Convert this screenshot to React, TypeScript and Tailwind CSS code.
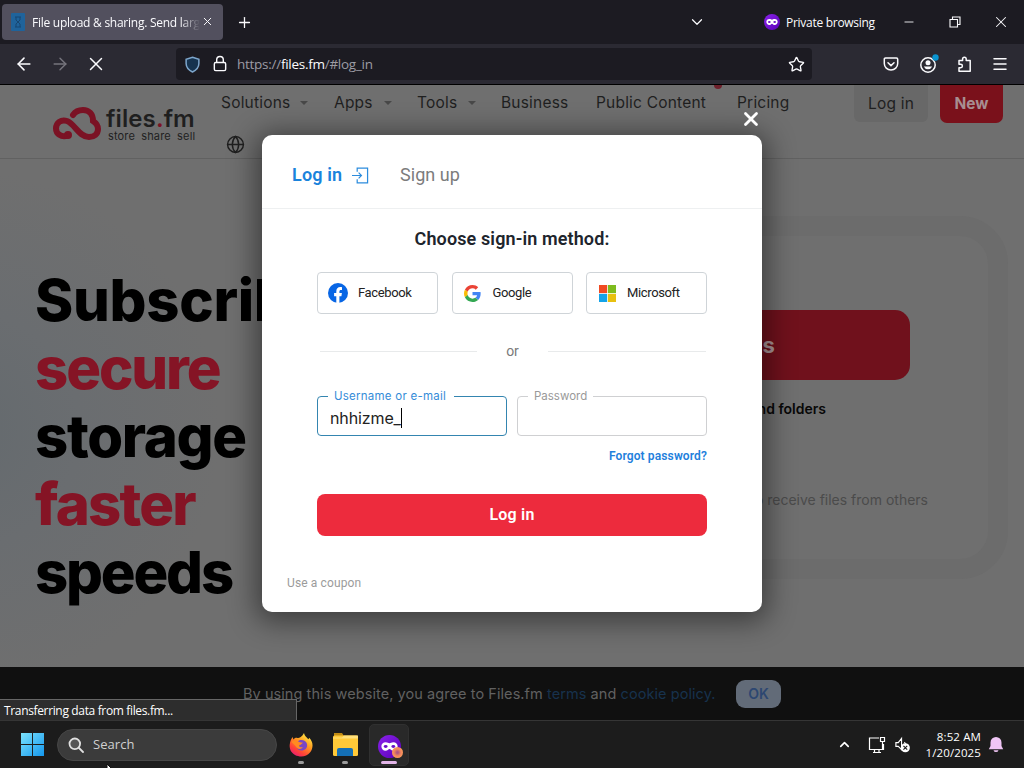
import { ReactNode } from "react";
import { ArrowLeft, ArrowRight, ChevronDown, ChevronUp, Globe, Lock, Menu, Minus, Plus, Search, Star, X } from "lucide-react";

const MaskIcon = ({ className }: { className: string }) => (
  <svg viewBox="0 0 24 24" className={className}>
    <defs>
      <linearGradient id="mask" x1="0" y1="0" x2="1" y2="1">
        <stop offset="0" stopColor="#8a22ea" />
        <stop offset="1" stopColor="#5a00b8" />
      </linearGradient>
    </defs>
    <circle cx="12" cy="12" r="12" fill="url(#mask)" />
    <path
      d="M8 7.500c2.200 0 2.800 1 4 1s1.800-1 4-1c2.700 0 4.500 1.800 4.500 4.300 0 2.700-2 4.700-4.300 4.700-2.200 0-3-2-4.200-2s-2 2-4.200 2c-2.300 0-4.300-2-4.300-4.700C3.500 9.300 5.300 7.500 8 7.500z"
      fill="#fff"
    />
    <ellipse cx="8" cy="12" rx="2" ry="1.500" fill="#6a10c8" />
    <ellipse cx="16" cy="12" rx="2" ry="1.500" fill="#6a10c8" />
  </svg>
);

const TitleBar = () => (
  <div className="flex h-11 shrink-0 items-center bg-[#1c1b22] text-[#fbfbfe]">
    <div className="ml-[2px] mb-px flex h-9 w-[221px] items-center rounded-[4px] bg-[#52505e] pl-[9px] pr-[8px]">
      <svg viewBox="0 0 14 18" className="h-[18px] w-[14px] shrink-0">
        <rect width="14" height="18" rx="1" fill="#1f639b" />
        <path d="M4 4h6M4 14h6M5 4v3l2 2-2 2v3M9 4v3L7 9l2 2v3" stroke="#174772" fill="none" />
      </svg>
      <span className="ml-[7px] w-[168px] overflow-hidden whitespace-nowrap pt-[2px] font-['Open_Sans',sans-serif] text-[12px] tracking-[-0.260px] [mask-image:linear-gradient(to_right,black_88%,transparent)]">
        File upload &amp; sharing. Send large files
      </span>
      <X className="ml-px size-[13px] shrink-0" strokeWidth={1.800} />
    </div>
    <Plus className="ml-[13px] size-[17px]" strokeWidth={1.800} />
    <div className="ml-auto flex items-center">
      <ChevronDown className="mr-[58px] size-[18px]" strokeWidth={1.600} />
      <MaskIcon className="size-4" />
      <span className="ml-[6px] w-[89px] whitespace-nowrap pt-px font-['Open_Sans',sans-serif] text-[12px] tracking-[-0.280px]">Private browsing</span>
      <Minus className="ml-[27px] size-[14px]" strokeWidth={1.500} />
      <svg viewBox="0 0 12 12" className="ml-[33px] size-3" fill="none" stroke="currentColor" strokeWidth="1.100">
        <path d="M1 3.500h7.500V11H1zM3.500 3.500V1H11v7.500H8.500" />
      </svg>
      <X className="ml-[31px] mr-[14px] size-[18px]" strokeWidth={1.400} />
    </div>
  </div>
);

const Toolbar = () => (
  <div className="flex h-10 shrink-0 items-center bg-[#2b2a33] text-[#fbfbfe]">
    <ArrowLeft className="ml-[14px] size-5" strokeWidth={1.900} />
    <ArrowRight className="ml-4 size-5 text-[#77767e]" strokeWidth={1.700} />
    <X className="ml-[15px] size-[22px]" strokeWidth={1.600} />
    <div className="ml-[69px] flex h-8 w-[636px] items-center rounded-[4px] bg-[#1c1b22] pl-[9px] pr-[7px]">
      <svg viewBox="0 0 16 18" className="h-[17px] w-[15px] shrink-0" fill="#16334f" stroke="#7da6cc" strokeWidth="1.600">
        <path d="M8 1.200 14.800 3.500V8c0 4-2.700 7-6.800 9C3.900 15 1.200 12 1.200 8V3.500z" />
      </svg>
      <svg viewBox="0 0 14 18" className="ml-[13px] mb-px h-[17px] w-[14px] shrink-0" fill="none" stroke="currentColor" strokeWidth="1.500">
        <rect x="1" y="8" width="12" height="8.500" rx="1.500" />
        <path d="M3.500 8V5a3.500 3.500 0 0 1 7 0v3" />
      </svg>
      <span className="ml-[10px] whitespace-nowrap pt-px font-['Open_Sans',sans-serif] text-[13.500px] tracking-[-0.270px] text-[#9d9ca4]">
        https://<span className="text-[#fbfbfe]">files.fm</span>/#log_in
      </span>
      <Star className="ml-auto size-[17px]" strokeWidth={1.900} />
    </div>
    <div className="ml-auto mr-[15px] flex items-center">
      <svg viewBox="0 0 16 16" className="size-4" fill="none" stroke="currentColor" strokeWidth="1.500" strokeLinecap="round">
        <path d="M2.500 2h11q1.200 0 1.200 1.200V7.500a6.700 6.500 0 0 1-13.400 0V3.200Q1.300 2 2.500 2zM5 6.800l3 2.800 3-2.800" />
      </svg>
      <svg viewBox="0 0 20 20" className="ml-[20px] size-5">
        <circle cx="9" cy="11" r="7.200" fill="none" stroke="currentColor" strokeWidth="1.500" />
        <circle cx="9" cy="8.800" r="2.500" fill="currentColor" />
        <path d="M4.800 12.500h8.400a4.600 4.600 0 0 1-8.400 0z" fill="currentColor" />
        <circle cx="16.500" cy="3.500" r="3.200" fill="#0a94d0" />
      </svg>
      <svg viewBox="0 0 16 16" className="ml-[18px] size-4" fill="none" stroke="currentColor" strokeWidth="1.500" strokeLinejoin="round">
        <path d="M2 4.500h3.600V3a1.800 1.800 0 0 1 3.600 0v1.500h4v10.700H2v-3.500h1.700a1.700 1.700 0 0 0 0-3.400H2z" />
      </svg>
      <Menu className="ml-[18px] size-[18px]" strokeWidth={2} />
    </div>
  </div>
);

const NavItem = ({ children, className, caret }: { children: ReactNode; className: string; caret?: boolean }) => (
  <a href="#" className={`flex items-center whitespace-nowrap ${className}`}>
    {children}
    {caret && <span className="ml-auto border-x-4 border-t-4 border-x-transparent border-t-[#484848]" />}
  </a>
);

const SiteHeader = () => (
  <header className="relative flex h-[74px] shrink-0 items-start border-b border-[#616161] font-['Inter',sans-serif] text-[#1f1f1f]">
    <div className="ml-[52px] mt-[21px] flex w-[169px]">
      <svg viewBox="0 0 50 35" className="h-[35px] w-[50px] shrink-0" fill="none" stroke="#7b1224" strokeWidth="6" strokeLinecap="round">
        <path d="M16 29.500C9 32 4 27.500 4 22.500 4 17 9 13 15 15c8 3 12 16 22 16 5 0 9-3 9-8 0-4-2-6-5-8C41 8 37 4 31 4c-5 0-8 2-10 5" />
        <circle cx="16" cy="29" r="1" />
      </svg>
      <div className="ml-[4px]">
        <div className="h-[23px] whitespace-nowrap text-[24px] font-semibold leading-[26px] tracking-[0.100px]">
          files<span className="text-[#7b1224]">.</span>fm
        </div>
        <div className="ml-[2px] mt-[3px] h-3 whitespace-nowrap text-[11px] leading-[8px] tracking-[0.150px] [word-spacing:3px]">store share sell</div>
      </div>
    </div>
    <nav className="mt-[8px] flex text-[15.500px] leading-5 tracking-[0.200px]">
      <NavItem className="w-[87px]" caret>Solutions</NavItem>
      <NavItem className="ml-[26px] w-[58px]" caret>Apps</NavItem>
      <NavItem className="ml-[25px] w-[59px]" caret>Tools</NavItem>
      <NavItem className="ml-[25px] w-[95px]">Business</NavItem>
      <NavItem className="w-[141px]">Public Content</NavItem>
      <NavItem className="w-[117px]">Pricing</NavItem>
    </nav>
    <div className="flex h-[37px] w-[74px] items-center justify-center rounded-b-[6px] bg-[#686868] text-[15.500px] tracking-[0.200px]">Log in</div>
    <div className="ml-[12px] flex h-[38px] w-[63px] items-center justify-center rounded-b-[7px] bg-[#7a111b] pb-px text-[15.500px] font-bold text-[#a78e91]">New</div>
    <Globe className="absolute left-[226px] top-[50px] size-[19px]" strokeWidth={1.800} />
    <span className="absolute left-[714px] top-0 h-1 w-2 rounded-b-full bg-[#6d202b]" />
  </header>
);

const Hero = () => (
  <main className="flex flex-1 overflow-hidden bg-[radial-gradient(circle_at_-40px_270px,#646a6e_0,#6a6d70_120px,transparent_260px)] font-['Inter',sans-serif]">
    <h1 className="ml-[35px] mt-[107px] w-[300px] text-[58px] font-extrabold leading-[68px] text-black">
      <span className="block tracking-[-0.300px]">Subscribe</span>
      <span className="block tracking-[-2.100px] text-[#851425]">secure</span>
      <span className="block tracking-[-1.300px]">storage</span>
      <span className="block tracking-[-1.800px] text-[#851425]">faster</span>
      <span className="block tracking-[-2.200px]">speeds</span>
    </h1>
    <section className="ml-[125px] mt-[57px] flex h-[363px] w-[548px] flex-col items-center rounded-[48px] border-[20px] border-[#6c6c6c] bg-[#6f6f6f]">
      <div className="mt-[74px] flex h-[70px] w-[352px] shrink-0 items-center justify-center rounded-[15px] bg-[#70111c] pr-[46px] text-[22px] font-bold text-[#aa9497]">
        Upload files
      </div>
      <p className="mr-[162px] mt-[19px] self-end whitespace-nowrap text-[14px] font-semibold leading-5 text-[#080808]">Send files and folders</p>
      <p className="mr-[60px] mt-[71px] self-end whitespace-nowrap text-[14px] leading-5 text-[#4b4b4b]">Ask to receive files from others</p>
    </section>
  </main>
);

const CookieBar = () => (
  <footer className="flex h-[53px] shrink-0 items-center bg-[#101010] font-['Inter',sans-serif] text-[14.500px] text-[#616161]">
    <p className="ml-[243px] w-[493px] whitespace-nowrap tracking-[0.070px]">
      By using this website, you agree to Files.fm <span className="text-[#17324d]">terms</span> and{" "}
      <span className="text-[#17324d]">cookie policy.</span>
    </p>
    <button className="h-7 w-[45px] rounded-[9px] bg-[#626b78] text-[14px] font-semibold text-[#2d4771]">OK</button>
  </footer>
);

const FacebookLogo = () => (
  <svg viewBox="0 0 20 20" className="size-5">
    <circle cx="10" cy="10" r="10" fill="#0866e5" />
    <path d="M8.300 19.900v-6.700H6.100V10h2.200V8.600c0-3 1.500-4.600 4-4.600.7 0 1.300.1 1.700.2v2.700h-1.200c-1 0-1.400.6-1.400 1.500V10h2.500l-.5 3.200h-2v6.700a10 10 0 0 1-3.100 0z" fill="#fff" />
  </svg>
);

const GoogleLogo = () => (
  <svg viewBox="0 0 48 48" className="size-[17px]">
    <path fill="#EA4335" d="M24 9.500c3.540 0 6.710 1.220 9.210 3.600l6.850-6.850C35.900 2.380 30.470 0 24 0 14.620 0 6.510 5.380 2.560 13.220l7.980 6.190C12.430 13.720 17.740 9.500 24 9.500z" />
    <path fill="#4285F4" d="M46.980 24.550c0-1.570-.15-3.090-.38-4.550H24v9.020h12.940c-.58 2.960-2.260 5.480-4.780 7.180l7.730 6c4.510-4.180 7.090-10.360 7.090-17.650z" />
    <path fill="#FBBC05" d="M10.530 28.590c-.48-1.450-.76-2.990-.76-4.590s.27-3.140.76-4.590l-7.980-6.190C.92 16.460 0 20.120 0 24c0 3.880.92 7.540 2.560 10.780l7.970-6.190z" />
    <path fill="#34A853" d="M24 48c6.480 0 11.930-2.130 15.890-5.810l-7.730-6c-2.150 1.450-4.920 2.300-8.160 2.300-6.260 0-11.570-4.220-13.470-9.910l-7.980 6.190C6.510 42.620 14.620 48 24 48z" />
  </svg>
);

const MicrosoftLogo = () => (
  <svg viewBox="0 0 18 18" className="size-[17px]">
    <path fill="#f04a22" d="M0 0h8.600v8.600H0z" />
    <path fill="#7ebc1e" d="M9.400 0H18v8.600H9.400z" />
    <path fill="#14a3e8" d="M0 9.400h8.600V18H0z" />
    <path fill="#e8c010" d="M9.400 9.400H18V18H9.400z" />
  </svg>
);

const methods = [
  { name: "Facebook", logo: <FacebookLogo /> },
  { name: "Google", logo: <GoogleLogo /> },
  { name: "Microsoft", logo: <MicrosoftLogo /> },
];

const LoginModal = () => (
  <div className="absolute left-[262px] top-[50px] h-[477px] w-[500px] rounded-[10px] bg-white font-['Roboto',sans-serif] shadow-[0_4px_28px_6px_rgba(0,0,0,0.450)]">
    <X className="absolute -top-[27px] right-0 size-[22px] text-white" strokeWidth={3} />
    <div className="flex h-[74px] items-center border-b border-[#eef0f1] pt-[6px] pl-[30px] text-[18px]">
      <span className="w-[60px] whitespace-nowrap font-semibold tracking-[0.150px] text-[#1a83dc]">Log in</span>
      <svg viewBox="0 0 18 18" className="mt-[2px] size-[17px]" fill="none" stroke="#2c8cdd" strokeWidth="1.300">
        <path d="M5.500 5V1.200h11v15.600h-11V13M0 9h10M7 6l3 3-3 3" />
      </svg>
      <span className="ml-[31px] tracking-[0.050px] text-[#7c7c7c]">Sign up</span>
    </div>
    <h2 className="mt-[18px] text-center text-[18px] font-semibold leading-6 tracking-[0.120px] text-[#20242c]">Choose sign-in method:</h2>
    <div className="mx-[55px] mt-[21px] flex justify-between">
      {methods.map((method) => (
        <button key={method.name} className="flex h-[42px] w-[121px] items-center rounded-[4px] border border-[#cfd4d8] pl-[10px] text-[13px] text-[#222]">
          <span className="flex w-5 justify-center">{method.logo}</span>
          <span className="ml-[10px] tracking-[-0.360px]">{method.name}</span>
        </button>
      ))}
    </div>
    <div className="mx-[56px] mt-[27px] flex h-5 items-center text-[14px] text-[#7a7a7a]">
      <span className="ml-[2px] h-px w-[157px] bg-[#e8eaeb]" />
      <span className="flex-1 text-center">or</span>
      <span className="h-px w-[158px] bg-[#e8eaeb]" />
    </div>
    <div className="mx-[55px] mt-[35px] flex justify-between font-['Inter',sans-serif]">
      <div className="relative flex h-10 w-[190px] items-center rounded-[4px] border border-[#3485b0] pl-3 pt-[3px]">
        <label className="absolute -top-[9px] left-[10px] whitespace-nowrap bg-white pl-[6px] pr-[8px] text-[11.500px] leading-4 tracking-[0.240px] text-[#358cd8]">Username or e-mail</label>
        <span className="text-[16px] leading-5 tracking-[-0.120px] text-[#222]">nhhizme_</span>
        <span className="h-5 w-px bg-black" />
      </div>
      <div className="relative h-10 w-[190px] rounded-[4px] border border-[#cfd0d2]">
        <label className="absolute -top-[9px] left-[10px] bg-white px-[6px] text-[11.500px] leading-4 text-[#999]">Password</label>
      </div>
    </div>
    <div className="mr-[55px] mt-[11px] text-right text-[12px] font-semibold leading-[18px] tracking-[0.120px] text-[#2380dc]">Forgot password?</div>
    <button className="mx-[55px] mt-[29px] h-[42px] w-[390px] rounded-[8px] bg-[#ed2b3d] text-[16px] font-semibold tracking-[0.200px] text-white">Log in</button>
    <div className="ml-[25px] mt-[38px] text-[12px] leading-[18px] tracking-[0.130px] text-[#9b9b9b]">Use a coupon</div>
  </div>
);

const FirefoxLogo = () => (
  <svg viewBox="0 0 24 24" className="size-6">
    <defs>
      <linearGradient id="flame" x1="0.850" y1="0.050" x2="0.250" y2="1">
        <stop offset="0" stopColor="#fff24a" />
        <stop offset="0.400" stopColor="#ff9a20" />
        <stop offset="0.750" stopColor="#ff4437" />
        <stop offset="1" stopColor="#ea1b72" />
      </linearGradient>
    </defs>
    <path d="M15 0c.8 3.500 3 4.200 4.200 6.200.6-.1.900-.9 1-1.400C24.500 9 24.500 15 21 19.500S11 24.500 6 22 0 14 1 10c.4-2 1-4 2.700-6l.6 2.500C5.500 5 7 4.600 8.500 5c2 0 4.500-1 6.500-5z" fill="url(#flame)" />
    <path d="M9 8.500c2-2.500 8-1.700 9 2.500.8 4-2 6.500-5.500 6.500-3 0-5-2-5.500-4.500l4-.8 2-1.700z" fill="#7a45c4" />
    <path d="M2.500 9c3-3 6-.7 7.500.2l4 .6c-1.500 1.700-4 1.400-4 2.700 0 1.700 2 2.200 4 1.500-2 3-6 2.500-7.500-1z" fill="#ff8b21" />
  </svg>
);

const Taskbar = () => (
  <div className="relative flex h-12 shrink-0 items-center border-t border-[#353535] bg-[#1c1c1c] font-['Open_Sans',sans-serif] text-white">
    <svg viewBox="0 0 24 24" className="ml-[21px] size-[23px]">
      <defs>
        <linearGradient id="win" x1="0" y1="0" x2="1" y2="1">
          <stop offset="0" stopColor="#7be2fc" />
          <stop offset="1" stopColor="#1497ee" />
        </linearGradient>
      </defs>
      <path d="M0 0h11.500v11.500H0zM12.500 0H24v11.500H12.500zM0 12.500h11.500V24H0zM12.500 12.500H24V24H12.500z" fill="url(#win)" />
    </svg>
    <div className="ml-[13px] flex h-8 w-[220px] items-center rounded-full border border-[#464646] bg-[#3b3b3b] pl-[10px]">
      <svg viewBox="0 0 16 16" className="size-4" fill="none" stroke="#e0e0e0" strokeWidth="1.800" strokeLinecap="round">
        <circle cx="6.800" cy="6.800" r="5.300" fill="#555" />
        <path d="m11 11 4 4" />
      </svg>
      <span className="ml-[9px] text-[13px] tracking-[0.050px] text-[#d0d0d0]">Search</span>
    </div>
    <div className="ml-[4px] flex h-10 w-10 flex-col items-center justify-end">
      <FirefoxLogo />
      <span className="mt-[4px] mb-px h-[3px] w-[6px] rounded-full bg-[#9b9b9b]" />
    </div>
    <div className="ml-[4px] flex h-10 w-10 flex-col items-center justify-end">
      <svg viewBox="0 0 25 23" className="h-[23px] w-[25px]">
        <path d="M1 0h8l2 3h-10z" fill="#c18b13" />
        <rect y="2.500" width="25" height="20.500" rx="1.500" fill="#ffc938" />
        <path d="M0 4.500h9l2-2h14v3H0z" fill="#ffe07b" />
        <path d="M4 23v-6q0-2 2-2h12q2 0 2 2v6z" fill="#146fb5" />
      </svg>
      <span className="mt-[5px] mb-px h-[3px] w-[6px] rounded-full bg-[#9b9b9b]" />
    </div>
    <div className="ml-[4px] flex h-[42px] w-10 flex-col items-center justify-end rounded-[5px] border border-[#303030] bg-[#292929]">
      <span className="relative">
        <MaskIcon className="size-[23px]" />
        <span className="absolute bottom-0 -right-[2px] size-[11px] rounded-full bg-[radial-gradient(circle,#b0567f_10%,#f3875d_45%,#ffa95a)]" />
      </span>
      <span className="mt-[3px] mb-px h-[3px] w-4 rounded-full bg-[#e2b5e8]" />
    </div>
    <div className="ml-auto flex items-center">
      <ChevronUp className="size-[15px]" strokeWidth={2.600} />
      <svg viewBox="0 0 18 18" className="ml-[16px] size-[18px]" fill="none" stroke="currentColor" strokeWidth="1.200">
        <path d="M11 2H1.500v11.500h14V8M5 16.500h8M6.500 14v2.500M11 14v2.500M12.500 1.500h4v4h-4zM14.500 5.500V14" />
      </svg>
      <svg viewBox="0 0 18 18" className="ml-[8px] mr-[14px] size-[17px]">
        <path d="M2 7v4h2.500L8 14.500v-12L4.500 7zM11 6.500q1 1 1 2" fill="none" stroke="#fff" strokeWidth="1.200" />
        <circle cx="12" cy="12.500" r="4.800" fill="#fff" />
        <path d="m10 10.500 4 4m0-4-4 4" stroke="#1c1c1c" strokeWidth="1.200" />
      </svg>
      <div className="w-[56px] whitespace-nowrap text-[11.500px] leading-4 tracking-[0.120px]">
        <div className="flex justify-end">8:52 AM</div>
        <div className="flex justify-end">1/20/2025</div>
      </div>
      <svg viewBox="0 0 16 16" className="ml-[7px] mr-5 size-4" fill="#efc5f5">
        <path d="M8 0a5.500 5.500 0 0 1 5.500 5.500V9l1.700 3.300H.8L2.500 9V5.500A5.500 5.500 0 0 1 8 0zM5.500 13.200h5a2.600 2.600 0 0 1-5 0z" />
      </svg>
    </div>
    {/* mouse cursor, partly off screen */}
    <svg viewBox="0 0 12 18" className="absolute left-[106px] top-[42px] h-[18px] w-3">
      <path d="M1 1v14l3.500-3 2.500 5 2-1-2.500-5H11z" fill="#fff" stroke="#111" />
    </svg>
  </div>
);

export default function App() {
  return (
    <div className="flex h-[768px] w-[1024px] flex-col overflow-hidden">
      <TitleBar />
      <Toolbar />
      <div className="relative flex min-h-0 flex-1 flex-col overflow-hidden border-t border-black bg-[#6f6f6f]">
        <SiteHeader />
        <Hero />
        <CookieBar />
        <LoginModal />
        <div className="absolute bottom-0 left-0 h-[21px] w-[297px] border-r border-t border-[#666] bg-[#2d2d2d] pl-1 font-['Open_Sans',sans-serif] text-[12px] leading-[22px] tracking-[-0.350px] text-white">
          Transferring data from files.fm...
        </div>
      </div>
      <Taskbar />
    </div>
  );
}
